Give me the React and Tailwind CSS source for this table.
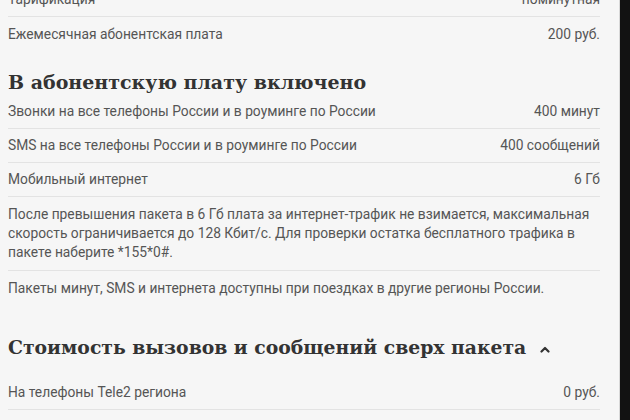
const body = { fontFamily: 'Roboto, "Noto Sans", sans-serif' }
const slab = { fontFamily: '"DejaVu Serif", "Liberation Serif", serif' }

function Row({ label, value, last }) {
  return (
    <div className={`flex h-[34px] items-center justify-between text-[13.8px] text-[#555] ${last ? '' : 'border-b border-[#e3e3e3]'}`}>
      <span>{label}</span>
      <span>{value}</span>
    </div>
  )
}

export default function App() {
  return (
    <div className="flex h-[420px] w-[630px] overflow-hidden bg-[#f6f6f6]" style={body}>
      <div className="w-[620px] overflow-hidden border-r border-[#d8d8d8] pl-2 pr-[19px]">
        <div className="-mt-[17px]">
          <Row label="Тарификация" value="поминутная" />
          <Row label="Ежемесячная абонентская плата" value="200 руб." last />
        </div>

        <h2 className="mt-[18px] text-[19px] font-bold leading-[26px] text-[#333]" style={slab}>
          В абонентскую плату включено
        </h2>
        <Row label="Звонки на все телефоны России и в роуминге по России" value="400 минут" />
        <Row label="SMS на все телефоны России и в роуминге по России" value="400 сообщений" />
        <Row label="Мобильный интернет" value="6 Гб" />
        <p className="border-b border-[#e3e3e3] py-2 text-[13.8px] leading-[19px] text-[#555]">
          После превышения пакета в 6 Гб плата за интернет-трафик не взимается, максимальная скорость ограничивается до 128 Кбит/с. Для проверки остатка бесплатного трафика в пакете наберите *155*0#.
        </p>
        <p className="py-2 text-[13.8px] leading-[19px] text-[#555]">
          Пакеты минут, SMS и интернета доступны при поездках в другие регионы России.
        </p>

        <h2 className="mt-[28px] flex items-center text-[18.8px] font-bold leading-[26px] text-[#333]" style={slab}>
          Стоимость вызовов и сообщений сверх пакета
          <svg className="ml-[14px] mt-1" width="10" height="7" viewBox="0 0 10 7" fill="none">
            <path d="M1.5 5.5 L5 2 L8.5 5.5" stroke="#333" strokeWidth="2.2" strokeLinecap="round" strokeLinejoin="round" />
          </svg>
        </h2>
        <div className="mt-[16px]">
          <Row label="На телефоны Tele2 региона" value="0 руб." />
          <Row label="На телефоны других операторов региона" value="1,50 руб." last />
        </div>
      </div>
      <div className="w-[10px] bg-[#121212]" />
    </div>
  )
}
